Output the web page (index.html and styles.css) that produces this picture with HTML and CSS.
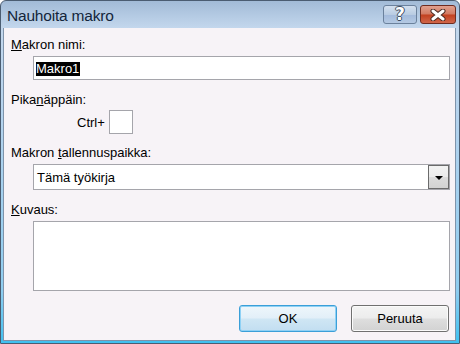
FILE: index.html
```html
<!DOCTYPE html>
<html lang="fi">
  <head>
    <meta charset="UTF-8" />
    <title>Nauhoita makro</title>
    <link rel="stylesheet" href="styles.css">
  </head>
  <body>
    <div class="window">
      <!-- Title bar -->
      <div class="titlebar">
        <span class="title">Nauhoita makro</span>
        <div class="caption-buttons">
          <div class="cap help">?</div>
          <div class="cap close">
            <svg width="16" height="12" viewBox="0 0 16 12">
              <path d="M3 2 L13 10 M13 2 L3 10" stroke="#4a2a22" stroke-width="5" stroke-linecap="round" fill="none" />
              <path d="M3 2 L13 10 M13 2 L3 10" stroke="#fff" stroke-width="3" stroke-linecap="round" fill="none" />
            </svg>
          </div>
        </div>
      </div>

      <!-- Dialog body -->
      <div class="client">
        <div class="label first"><u>M</u>akron nimi:</div>
        <div class="field textbox"><span class="selected">Makro1</span></div>

        <div class="label gap">Pika<u>n</u>äppäin:</div>
        <div class="shortcut">
          <span>Ctrl+</span>
          <div class="keybox"></div>
        </div>

        <div class="label gap-small">Makron <u>t</u>allennuspaikka:</div>
        <div class="field combo">
          <span class="combo-text">Tämä työkirja</span>
          <div class="combo-button"><span class="arrow"></span></div>
        </div>

        <div class="label gap"><u>K</u>uvaus:</div>
        <div class="field memo"></div>

        <div class="buttons">
          <div class="button default">OK</div>
          <div class="button">Peruuta</div>
        </div>
      </div>
    </div>
  </body>
</html>
```

FILE: styles.css
```css
/* Global */
body {
  margin: 0;
  padding: 0;
  background: #fff;
  font-family: "Liberation Sans", Arial, sans-serif;
  font-size: 13px;
  color: #000;
}

.window {
  width: 460px;
  height: 344px;
  box-sizing: border-box;
  border: 1px solid #4b5d72;
  border-radius: 6px 6px 0 0;
  padding: 0 3px 2px 2px;
  display: flex;
  flex-direction: column;
  background: linear-gradient(to bottom, #a2bbd7 0, #c3d7ed 27px, #b4d3ee 120px, #8fcdf0 290px, #3fc0f0 100%);
}

/* Title bar */
.titlebar {
  height: 27px;
  display: flex;
  justify-content: space-between;
  align-items: flex-start;
  padding-left: 4px;
}

.title {
  font-size: 15.5px;
  letter-spacing: -0.2px;
  line-height: 30px;
  color: #13253a;
}

.caption-buttons {
  display: flex;
  gap: 3px;
  padding-top: 4px;
}

.cap {
  height: 19px;
  box-sizing: border-box;
  border-radius: 3px;
  display: flex;
  align-items: center;
  justify-content: center;
}

.help {
  width: 34px;
  border: 1px solid #6b819c;
  background: linear-gradient(to bottom, #d3e0ef 0%, #b9cce2 50%, #a3badb 51%, #b4c9e3 100%);
  color: #fff;
  font-family: "DejaVu Sans", sans-serif;
  font-weight: bold;
  font-size: 17px;
  line-height: 19px;
  text-shadow: -1px 0 #3d4c60, 1px 0 #3d4c60, 0 -1px #3d4c60, 0 1px #3d4c60;
}

.close {
  width: 36px;
  border: 1px solid #6e2b1f;
  background: linear-gradient(to bottom, #e1a08e 0%, #d27a62 48%, #c2401f 52%, #d0664a 100%);
}

/* Dialog body */
.client {
  flex: 1;
  background: #f7f3f7;
  border: 1px solid #7f93aa;
  border-top: none;
  padding: 0 5px 0 7px;
}

.label {
  line-height: 16px;
  height: 16px;
  margin-bottom: 3px;
}

.label.first {
  margin-top: 9px;
}

.label.gap {
  margin-top: 12px;
}

.label.gap-small {
  margin-top: 11px;
}

.field {
  margin-left: 22px;
  box-sizing: border-box;
  border: 1px solid #a5a5ab;
  background: #fff;
}

.textbox {
  height: 24px;
  padding: 4px 3px 0 3px;
}

.selected {
  display: inline-block;
  background: #000;
  color: #fff;
  line-height: 14px;
  padding: 0 1px 0 0;
  margin-left: -1px;
}

.shortcut {
  display: flex;
  align-items: center;
  gap: 4px;
  padding-left: 66px;
  margin-top: -1px;
}

.keybox {
  width: 24px;
  height: 24px;
  box-sizing: border-box;
  border: 1px solid #a5a5ab;
  background: #fff;
}

.combo {
  height: 26px;
  display: flex;
  align-items: center;
  justify-content: space-between;
  padding-left: 3px;
}

.combo-button {
  width: 21px;
  height: 24px;
  box-sizing: border-box;
  border: 1px solid #6b6b6b;
  background: linear-gradient(to bottom, #f3f3f3 0%, #ebebeb 50%, #dcdcdc 51%, #d2d2d2 100%);
  display: flex;
  align-items: center;
  justify-content: center;
}

.arrow {
  width: 0;
  height: 0;
  border-left: 4px solid transparent;
  border-right: 4px solid transparent;
  border-top: 4px solid #000;
  margin-top: 1px;
}

.memo {
  height: 70px;
}

/* Buttons */
.buttons {
  display: flex;
  justify-content: flex-end;
  gap: 14px;
  margin-top: 14px;
  padding-right: 1px;
}

.button {
  width: 98px;
  height: 27px;
  box-sizing: border-box;
  border: 1px solid #707070;
  border-radius: 3px;
  background: linear-gradient(to bottom, #f4f4f4 0%, #ececec 48%, #dedede 52%, #d2d2d2 100%);
  display: flex;
  align-items: center;
  justify-content: center;
  box-shadow: inset 0 0 0 1px #fbfbfb;
}

.button.default {
  border-color: #3b9fd8;
  background: linear-gradient(to bottom, #eef6fb 0%, #e2eff8 48%, #cfe6f4 52%, #c2def1 100%);
  box-shadow: inset 0 0 0 1px #8fd1f5;
}
```
